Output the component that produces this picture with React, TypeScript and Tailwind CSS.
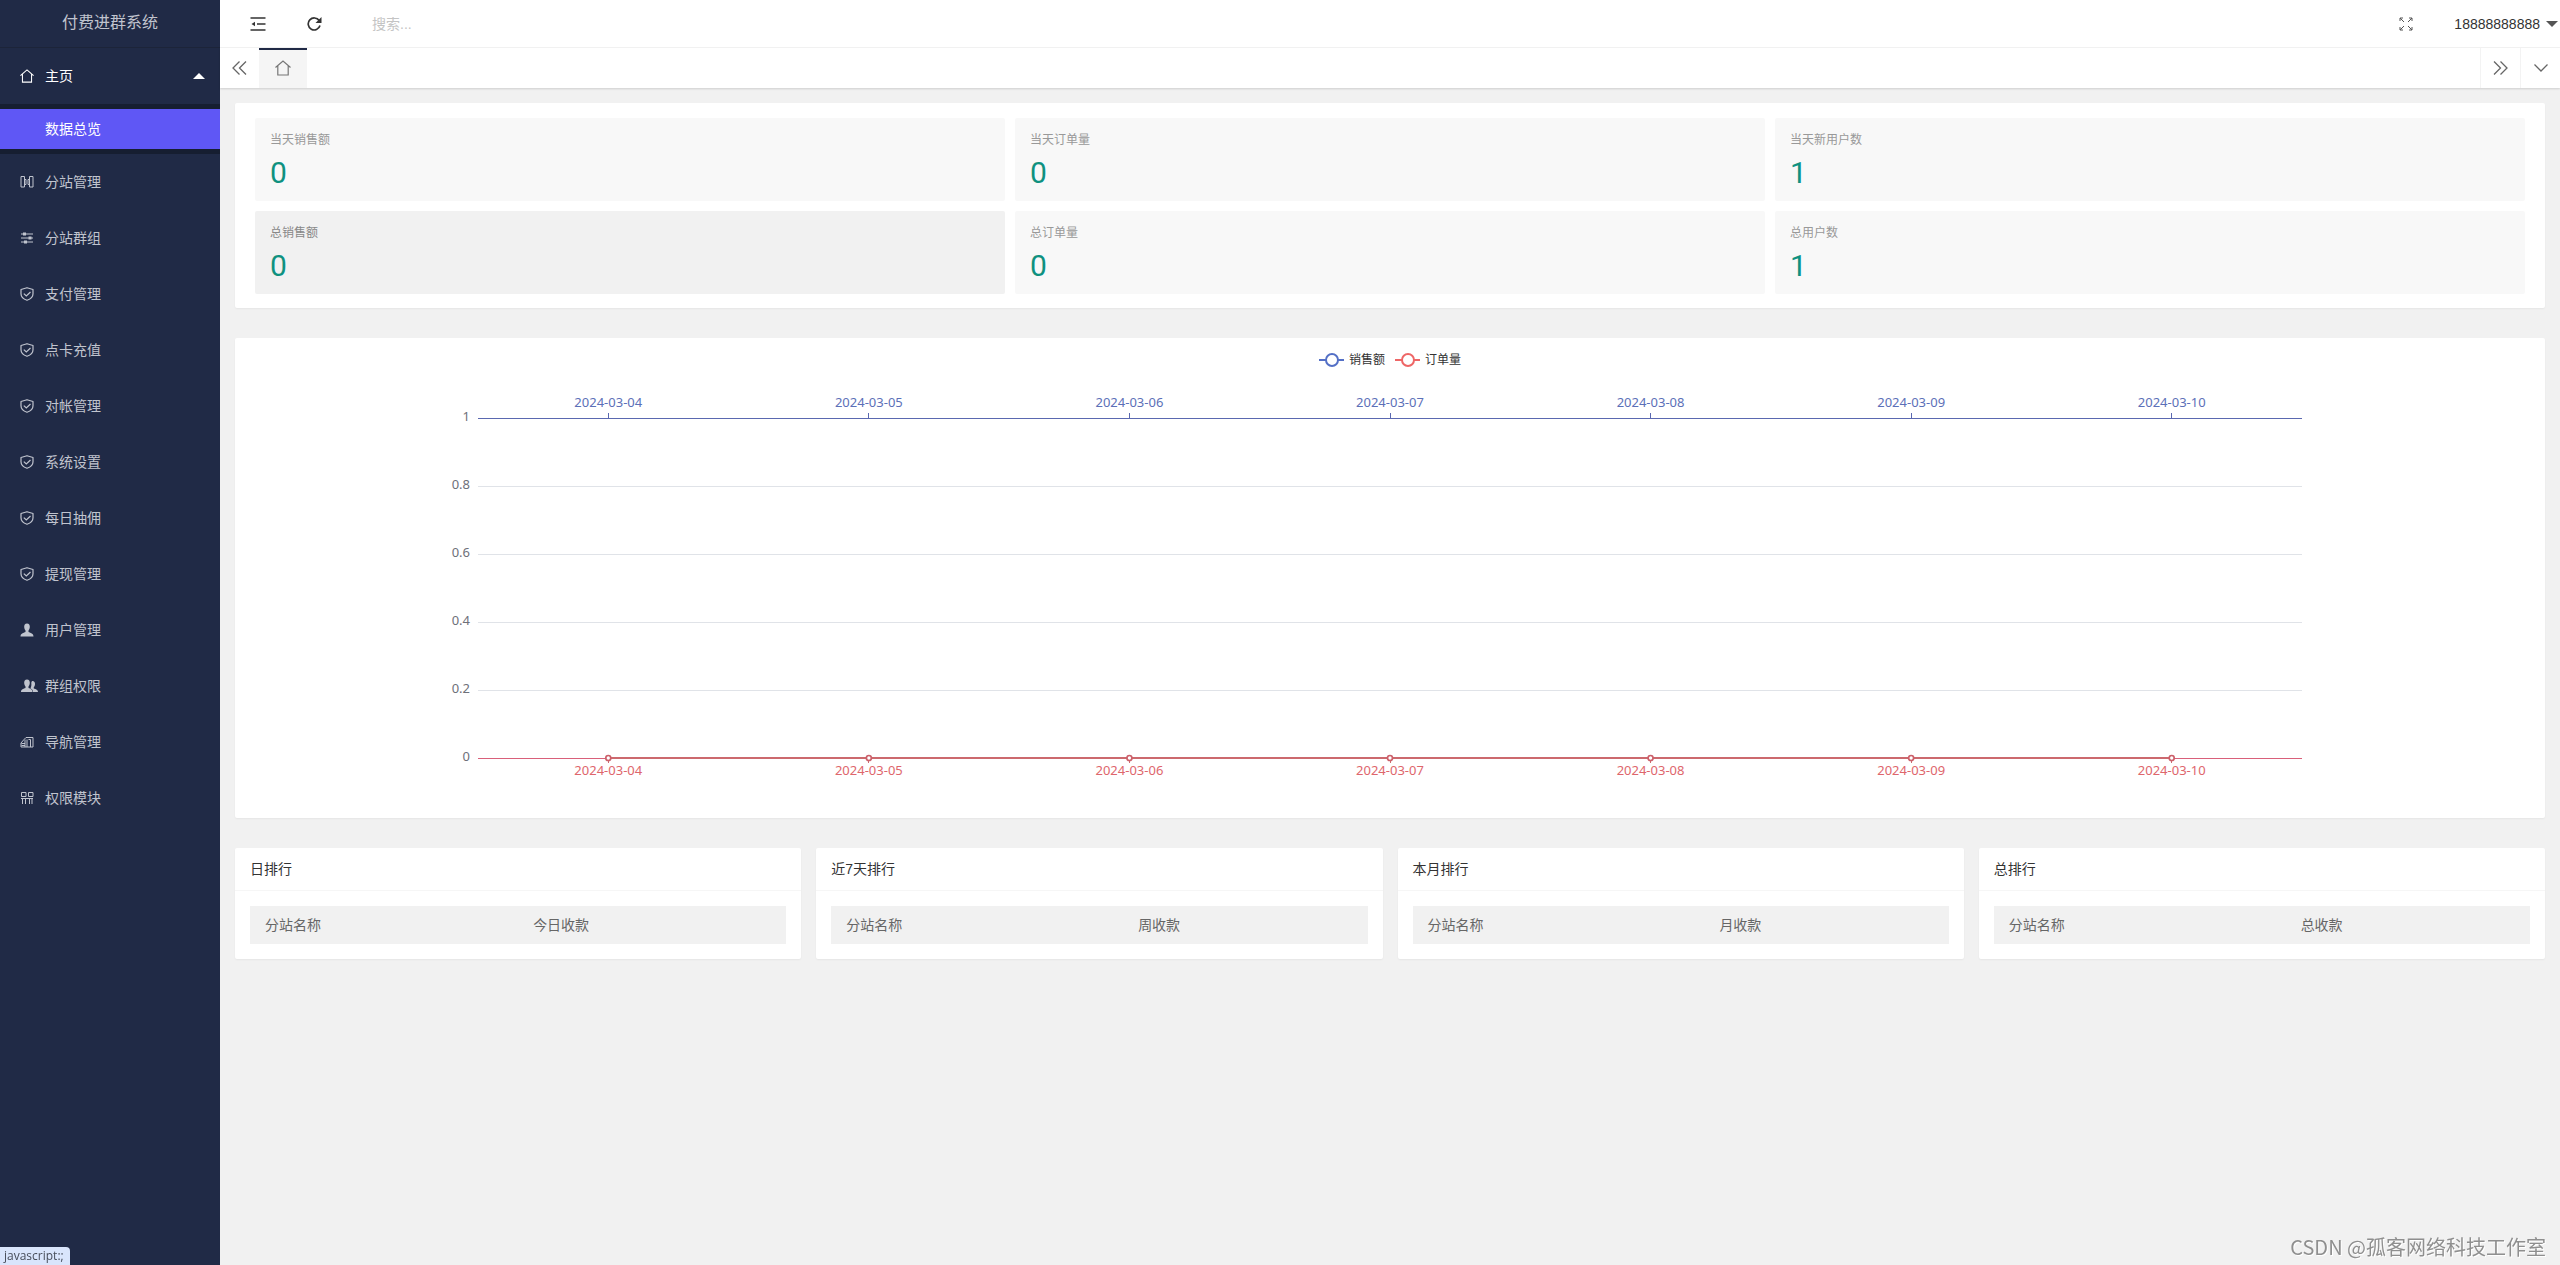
import type { ReactNode } from "react";

const menu = [
  { label: "分站管理", icon: "columns" },
  { label: "分站群组", icon: "sliders" },
  { label: "支付管理", icon: "shield" },
  { label: "点卡充值", icon: "shield" },
  { label: "对帐管理", icon: "shield" },
  { label: "系统设置", icon: "shield" },
  { label: "每日抽佣", icon: "shield" },
  { label: "提现管理", icon: "shield" },
  { label: "用户管理", icon: "user" },
  { label: "群组权限", icon: "users" },
  { label: "导航管理", icon: "nav" },
  { label: "权限模块", icon: "modules" },
];

const stats = [
  { label: "当天销售额", value: 0 },
  { label: "当天订单量", value: 0 },
  { label: "当天新用户数", value: 1 },
  { label: "总销售额", value: 0, hover: true },
  { label: "总订单量", value: 0 },
  { label: "总用户数", value: 1 },
];

const ranks = [
  { title: "日排行", column: "今日收款" },
  { title: "近7天排行", column: "周收款" },
  { title: "本月排行", column: "月收款" },
  { title: "总排行", column: "总收款" },
];

const days = ["2024-03-04", "2024-03-05", "2024-03-06", "2024-03-07", "2024-03-08", "2024-03-09", "2024-03-10"];

export default function App() {
  return (
    <div className="flex min-h-screen bg-[#f1f1f1] font-['Liberation_Sans','Noto_Sans_CJK_SC',sans-serif] text-sm text-[#333]">
      <Sidebar />
      <div className="flex min-w-0 flex-1 flex-col">
        <TopBar />
        <TabBar />
        <main className="flex flex-col gap-[30px] p-[15px]">
          {/* Totals */}
          <Card>
            <div className="grid grid-cols-3 gap-2.5 px-5 pt-[15px] pb-3.5">
              {stats.map((s) => (
                <StatTile key={s.label} {...s} />
              ))}
            </div>
          </Card>

          {/* Sales chart */}
          <Card>
            <div className="px-[15px]">
              <SalesChart />
            </div>
          </Card>

          {/* Rankings */}
          <div className="grid grid-cols-4 gap-[15px]">
            {ranks.map((r) => (
              <RankCard key={r.title} {...r} />
            ))}
          </div>
        </main>
      </div>

      <div className="fixed bottom-0 left-0 rounded-tr bg-[#d9e5fc] pr-1.5 pl-1 font-['Open_Sans',sans-serif] text-xs leading-[18px] text-[#474d5a]">
        javascript:;
      </div>
      <div className="fixed right-3.5 bottom-1 font-['Noto_Sans_CJK_SC',sans-serif] text-xl text-[#8f8f8f] [text-shadow:1px_1px_0_#fff]">
        CSDN @孤客网络科技工作室
      </div>
    </div>
  );
}

function Sidebar() {
  return (
    <aside className="w-[220px] shrink-0 bg-[#202a46] text-[#c0c4ce]">
      <div className="h-12 border-b border-[#1c2439] text-center text-base leading-[46px]">付费进群系统</div>
      <nav>
        <a href="#" className="flex h-14 items-center pr-[15px] pl-5 text-white">
          <span className="w-[25px]">
            <HomeIcon size={14} />
          </span>
          主页
          <svg className="ml-auto" width="12" height="6" viewBox="0 0 12 6" fill="currentColor">
            <path d="M0 6 6 0l6 6z" />
          </svg>
        </a>
        <div className="bg-[#161e31] py-[5px]">
          <a href="#" className="block bg-[#5f57f5] pl-[45px] leading-10 text-white">数据总览</a>
        </div>
        {menu.map((m) => (
          <a key={m.label} href="#" className="flex h-14 items-center pl-5 hover:text-white">
            <span className="w-[25px]">
              <MenuIcon name={m.icon} />
            </span>
            {m.label}
          </a>
        ))}
      </nav>
    </aside>
  );
}

function TopBar() {
  return (
    <header className="flex h-12 items-center border-b border-[#f3f3f3] bg-white">
      <button aria-label="侧边伸缩" className="ml-[30px]">
        <svg width="16" height="14" viewBox="0 0 16 14" fill="none" stroke="#333" strokeWidth="1.5">
          <path d="M0.5 1h15M7 7h8.500M0.500 13h15" />
          <path d="M5 4.800v4.400L1.500 7z" fill="#333" stroke="none" />
        </svg>
      </button>
      <button aria-label="刷新" className="ml-[41px]">
        <svg width="15" height="14" viewBox="0 0 15 14" fill="none" stroke="#333" strokeWidth="1.700">
          <path d="M12.200 3.600A6 6 0 1 0 13 8.600" />
          <path d="M14.500 0v6h-6z" fill="#333" stroke="none" />
        </svg>
      </button>
      <input
        type="text"
        aria-label="搜索"
        placeholder="搜索..."
        className="ml-[50px] w-[200px] text-sm outline-none placeholder:text-[#c4c4c4]"
      />
      <button aria-label="全屏" className="ml-auto">
        <svg width="14" height="14" viewBox="0 0 14 14" fill="none" stroke="#555">
          <path d="M1 4V1h3M1 1l4 4M10 1h3v3M13 1 9 5M1 10v3h3M1 13l4-4M10 13h3v-3M13 13 9 9" />
        </svg>
      </button>
      <button className="ml-[41px] flex items-center gap-1.5 pr-0.5 leading-none">
        18888888888
        <svg width="12" height="6" viewBox="0 0 12 6" fill="#555">
          <path d="M0 0h12L6 6z" />
        </svg>
      </button>
    </header>
  );
}

function TabBar() {
  return (
    <div className="z-10 flex h-10 bg-white text-[#666] shadow-[0_1px_2px_rgba(0,0,0,0.15)]">
      <button aria-label="向左滚动" className="flex w-[39px] items-center justify-center">
        <svg width="15" height="14" viewBox="0 0 15 14" fill="none" stroke="currentColor" strokeWidth="1.300">
          <path d="M7.500 0.500 1 7l6.500 6.500M14 0.500 7.500 7l6.500 6.500" />
        </svg>
      </button>
      <button aria-label="主页" className="flex w-[48px] items-center justify-center border-t-2 border-[#202a46] bg-[#f5f5f5] pb-0.5 text-[#777]">
        <HomeIcon size={16} />
      </button>
      <button aria-label="向右滚动" className="ml-auto flex w-10 items-center justify-center border-l border-[#f3f3f3]">
        <svg width="15" height="14" viewBox="0 0 15 14" fill="none" stroke="currentColor" strokeWidth="1.300">
          <path d="M1 0.500 7.500 7 1 13.500M7.500 0.500 14 7l-6.500 6.500" />
        </svg>
      </button>
      <button aria-label="更多操作" className="flex w-10 items-center justify-center border-l border-[#f3f3f3]">
        <svg width="14" height="8" viewBox="0 0 14 8" fill="none" stroke="currentColor" strokeWidth="1.300">
          <path d="M0.500 0.500 7 7l6.500-6.500" />
        </svg>
      </button>
    </div>
  );
}

function Card({ children }: { children: ReactNode }) {
  return <section className="rounded-xs bg-white shadow-[0_1px_2px_rgba(0,0,0,0.05)]">{children}</section>;
}

function StatTile({ label, value, hover }: { label: string; value: number; hover?: boolean }) {
  return (
    <div className={`rounded-xs px-[15px] pt-3 pb-2.5 ${hover ? "bg-[#f1f1f1] text-[#888]" : "bg-[#f8f8f8] text-[#999]"}`}>
      <h3 className="text-xs leading-5">{label}</h3>
      <p className="mt-[5px] font-[Roboto,sans-serif] text-3xl leading-9 text-[#0f9180]">{value}</p>
    </div>
  );
}

function RankCard({ title, column }: { title: string; column: string }) {
  return (
    <Card>
      <h2 className="border-b border-[#f6f6f6] px-[15px] leading-[42px]">{title}</h2>
      <div className="p-[15px]">
        <table className="w-full bg-[#f1f1f1] text-left text-[#666]">
          <thead>
            <tr>
              <th className="px-[15px] py-[9px] leading-5 font-normal">分站名称</th>
              <th className="px-[15px] py-[9px] leading-5 font-normal">{column}</th>
            </tr>
          </thead>
        </table>
      </div>
    </Card>
  );
}

function SalesChart() {
  const top = 80;
  const bottom = 420;
  const dayX = (i: number) => `${10 + (80 * (i + 0.5)) / days.length}%`;

  return (
    <svg className="block h-[480px] w-full font-['Noto_Sans','Noto_Sans_CJK_SC',sans-serif] text-[13px]">
      {/* Legend, centred on the chart */}
      <svg x="50%" y="0" overflow="visible" className="text-xs" fill="#333">
        <path d="M-71 22h25" stroke="#5470c6" strokeWidth="2" />
        <circle cx="-58" cy="22" r="6" fill="#fff" stroke="#5470c6" strokeWidth="2" />
        <text x="-41" y="26">销售额</text>
        <path d="M5 22h25" stroke="#ee6666" strokeWidth="2" />
        <circle cx="18" cy="22" r="6" fill="#fff" stroke="#ee6666" strokeWidth="2" />
        <text x="35" y="26">订单量</text>
      </svg>

      {/* Value axis */}
      {[1, 0.8, 0.6, 0.4, 0.2, 0].map((v) => {
        const y = bottom - v * (bottom - top);
        return (
          <g key={v}>
            {v > 0 && v < 1 && (
              <line x1="10%" x2="90%" y1={y} y2={y} stroke="#e0e3e8" shapeRendering="crispEdges" />
            )}
            <svg x="10%" y={y} overflow="visible">
              <text x="-8" y="3" textAnchor="end" fill="#6e7079">{v}</text>
            </svg>
          </g>
        );
      })}

      {/* Date axes */}
      <line x1="10%" x2="90%" y1={top} y2={top} stroke="#5a68b0" shapeRendering="crispEdges" />
      <line x1="10%" x2="90%" y1={bottom} y2={bottom} stroke="#d9607a" shapeRendering="crispEdges" />
      <line x1={dayX(0)} x2={dayX(6)} y1={bottom} y2={bottom} stroke="#cc696e" strokeWidth="2" />
      {days.map((d, i) => (
        <g key={d}>
          <line x1={dayX(i)} x2={dayX(i)} y1={top - 5} y2={top} stroke="#5a68b0" shapeRendering="crispEdges" />
          <text x={dayX(i)} y="69" textAnchor="middle" fill="#5c70b8">{d}</text>
          <line x1={dayX(i)} x2={dayX(i)} y1={bottom} y2={bottom + 5} stroke="#cc696e" shapeRendering="crispEdges" />
          <circle cx={dayX(i)} cy={bottom} r="2.500" fill="#fff" stroke="#cc606a" strokeWidth="1.700" />
          <text x={dayX(i)} y="437" textAnchor="middle" fill="#de666c">{d}</text>
        </g>
      ))}
    </svg>
  );
}

function HomeIcon({ size }: { size: number }) {
  return (
    <svg width={size} height={size} viewBox="0 0 16 16" fill="none" stroke="currentColor" strokeWidth="1.200">
      <path d="M0.500 7.500 8 1l7.500 6.500M2.800 6v9h10.400V6" />
    </svg>
  );
}

function MenuIcon({ name }: { name: string }) {
  if (name === "users") {
    return (
      <svg width="18" height="14" viewBox="0 0 18 14" fill="currentColor">
        <path d="M12.500 2c1.800 0 2.700 1.300 2.500 3.200-.1 1.400-.6 2.300-1.200 2.900v1.300c2 .8 4.200 1.200 4.200 3.600h-5c0-2-1-2.700-2.600-3.500.8-1.500 1.200-3.200.9-5.700.2-1.200.6-1.800 1.200-1.800z" />
        <path d="M7 .5c2 0 3 1.500 2.800 3.600C9.700 5.700 9.200 6.800 8.500 7.500V9c2 .9 4 1.300 4 4H1c0-2.700 2.500-3.100 4.500-4V7.500C4.800 6.800 4.300 5.700 4.200 4.100 4 2 5 .5 7 .5z" />
      </svg>
    );
  }
  return (
    <svg width="14" height="14" viewBox="0 0 14 14" fill="none" stroke="currentColor" strokeWidth="1.200">
      {name === "columns" && <path d="M1 1.500h3.500v10.500H1zM9.500 1.500H13v10.500H9.500zM4.500 4.500H6v5H4.500M9.500 4.500H8v5h1.500" strokeWidth="1" />}
      {name === "sliders" && (
        <>
          <path d="M1 3h12M1 7h12M1 11h12" />
          <path d="M3 1.500h3v3H3zM8.500 5.500h3v3h-3zM4 9.500h3v3H4z" fill="currentColor" stroke="none" />
        </>
      )}
      {name === "shield" && (
        <>
          <path d="M7 .7 13 2.500v4.300c0 3.200-2.500 5.400-6 6.500C3.500 12.200 1 10 1 6.800V2.500z" strokeLinejoin="round" />
          <path d="M3.800 6.600 6.300 9l4.200-4" />
        </>
      )}
      {name === "user" && (
        <path
          d="M7 .5c2 0 3 1.500 2.800 3.600C9.700 5.700 9.200 6.800 8.500 7.500V9c2 .9 5 1.300 5 4.500H.5C.5 10.300 3.500 9.900 5.500 9V7.500C4.800 6.800 4.300 5.700 4.200 4.100 4 2 5 .5 7 .5z"
          fill="currentColor"
          stroke="none"
        />
      )}
      {name === "nav" && (
        <path d="M4 4.500 6 2.500h7V12H1V8l3-3.500zM5 4.500V12M7 4.500V12M8.500 4.500h2V12M1.500 8.500H5M1.500 10.500H5" strokeWidth="1" />
      )}
      {name === "modules" && <path d="M1.500 1.500H6v4H1.500zM8.500 1.500H13v4H8.500zM2.500 7.500v5.500M5.500 7.500v5.500M9.500 7.500v5.500M12 7.500v5.500M1 7.500h12" strokeWidth="1" />}
    </svg>
  );
}
